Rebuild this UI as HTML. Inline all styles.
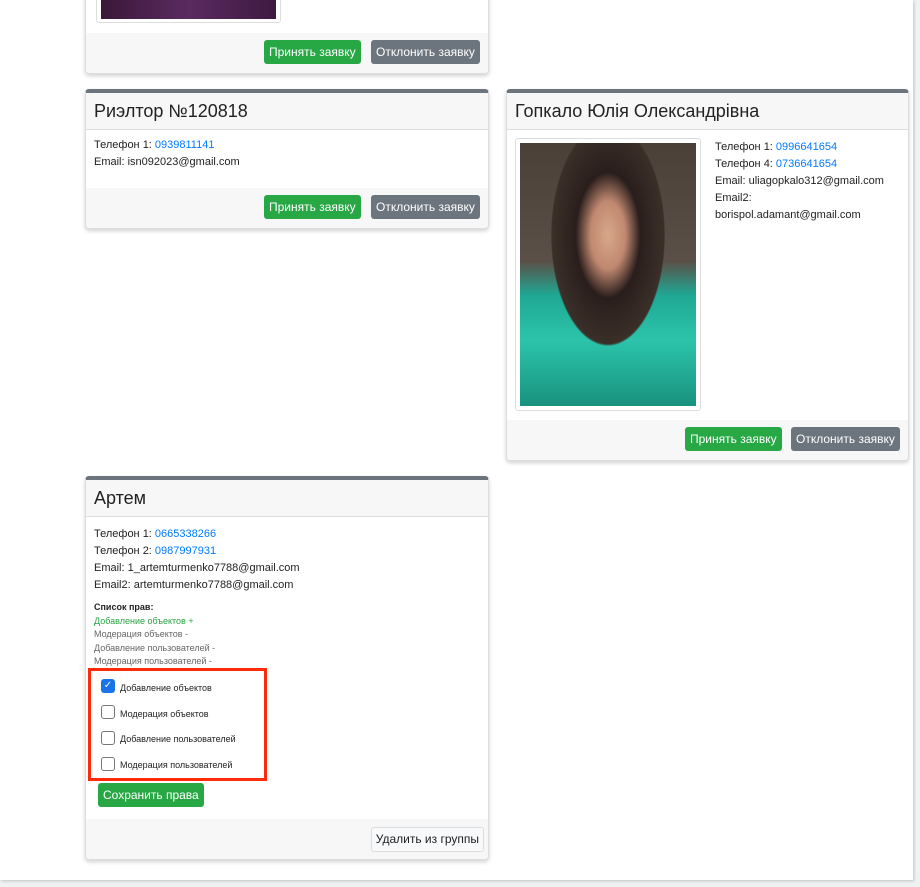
<!DOCTYPE html>
<html><head><meta charset="utf-8"><style>
body{margin:0;width:920px;height:887px;background:#f0f1f3;font-family:"Liberation Sans",sans-serif;position:relative;overflow:hidden}
.main{position:absolute;left:0;top:0;width:913px;height:880px;background:#fff;box-shadow:1px 1px 3px rgba(0,0,0,.2)}
.card{position:absolute;background:#fff;border:1px solid #ddd;border-top:4px solid #6c757d;border-radius:4px;box-shadow:0 2px 4px rgba(0,0,0,.18);overflow:hidden}
.hd{background:#f7f7f8;border-bottom:1px solid #ddd;height:36px;padding-left:8px;font-size:18px;color:#222;line-height:36px}
.ft{position:absolute;left:0;right:0;bottom:0;height:40px;background:#f7f7f8}
.btn{position:absolute;top:7px;height:24px;line-height:24px;font-size:12px;color:#fff;border-radius:3px;padding:0 5px}
.g{background:#28a745}.s{background:#6c757d}
.t{font-size:11px;color:#222;line-height:17px}
a{color:#007bff;text-decoration:none}
.cb{position:absolute;left:10px;width:12px;height:12px;border:1px solid #777;border-radius:3px;background:#fff}
.cl{position:absolute;left:29px;font-size:9px;color:#222}
</style></head><body>
<div class="main"></div>
<div class="card" style="left:85px;top:-10px;width:402px;height:82px;border-top:1px solid #ddd">
 <div style="position:absolute;left:10px;top:0;width:183px;height:30px;border:1px solid #ddd;border-radius:3px;background:#fff"><div style="margin:0 4px;height:27px;background:linear-gradient(90deg,#3a1838,#5a2a60,#3d1a40)"></div></div>
 <div class="ft"><div class="btn g" style="left:178px">Принять заявку</div><div class="btn s" style="left:285px">Отклонить заявку</div></div>
</div>
<div class="card" style="left:85px;top:89px;width:402px;height:135px">
 <div class="hd">Риэлтор №120818</div>
 <div class="t" style="padding:7px 8px">Телефон 1: <a>0939811141</a><br>Email: isn092023@gmail.com</div>
 <div class="ft"><div class="btn g" style="left:178px">Принять заявку</div><div class="btn s" style="left:285px">Отклонить заявку</div></div>
</div>
<div class="card" style="left:506px;top:89px;width:401px;height:367px">
 <div class="hd">Гопкало Юлія Олександрівна</div>
 <div style="position:absolute;left:8px;top:45px;width:184px;height:271px;border:1px solid #ddd;border-radius:3px">
  <div style="position:absolute;left:4px;top:4px;width:176px;height:263px;background:radial-gradient(ellipse at 50% 35%,#d8a88a 0,#c08870 14%,#2a1e1c 26%,#3a3028 45%,transparent 46%),linear-gradient(180deg,#4a4038 0,#5a5048 45%,#1fa894 58%,#2cc4ab 75%,#18927f 100%)"></div>
 </div>
 <div class="t" style="position:absolute;left:208px;top:46px">Телефон 1: <a>0996641654</a><br>Телефон 4: <a>0736641654</a><br>Email: uliagopkalo312@gmail.com<br>Email2:<br>borispol.adamant@gmail.com</div>
 <div class="ft"><div class="btn g" style="left:178px">Принять заявку</div><div class="btn s" style="left:284px">Отклонить заявку</div></div>
</div>
<div class="card" style="left:85px;top:476px;width:402px;height:379px">
 <div class="hd">Артем</div>
 <div class="t" style="padding:9px 8px 0">Телефон 1: <a>0665338266</a><br>Телефон 2: <a>0987997931</a><br>Email: 1_artemturmenko7788@gmail.com<br>Email2: artemturmenko7788@gmail.com</div>
 <div style="position:absolute;left:8px;top:121px;font-size:9px;line-height:13.5px;color:#666">
  <b style="color:#222">Список прав:</b><br><span style="color:#28a745">Добавление объектов +</span><br>Модерация объектов -<br>Добавление пользователей -<br>Модерация пользователей -</div>
 <div style="position:absolute;left:2px;top:188px;width:179px;height:113px;border:3px solid #ff2a0a;box-sizing:border-box">
  <div class="cb" style="top:8px;background:#1a73e8;border-color:#1a73e8;color:#fff;font-size:10px;line-height:12px;text-align:center">✓</div><div class="cl" style="top:12px">Добавление объектов</div>
  <div class="cb" style="top:34px"></div><div class="cl" style="top:38px">Модерация объектов</div>
  <div class="cb" style="top:60px"></div><div class="cl" style="top:63px">Добавление пользователей</div>
  <div class="cb" style="top:86px"></div><div class="cl" style="top:89px">Модерация пользователей</div>
 </div>
 <div class="btn g" style="left:12px;top:303px;font-size:12px">Сохранить права</div>
 <div class="ft"><div style="position:absolute;right:4px;top:8px;height:23px;line-height:23px;padding:0 4px;font-size:12px;color:#222;background:#f8f9fa;border:1px solid #ddd;border-radius:3px">Удалить из группы</div></div>
</div>
</body></html>
